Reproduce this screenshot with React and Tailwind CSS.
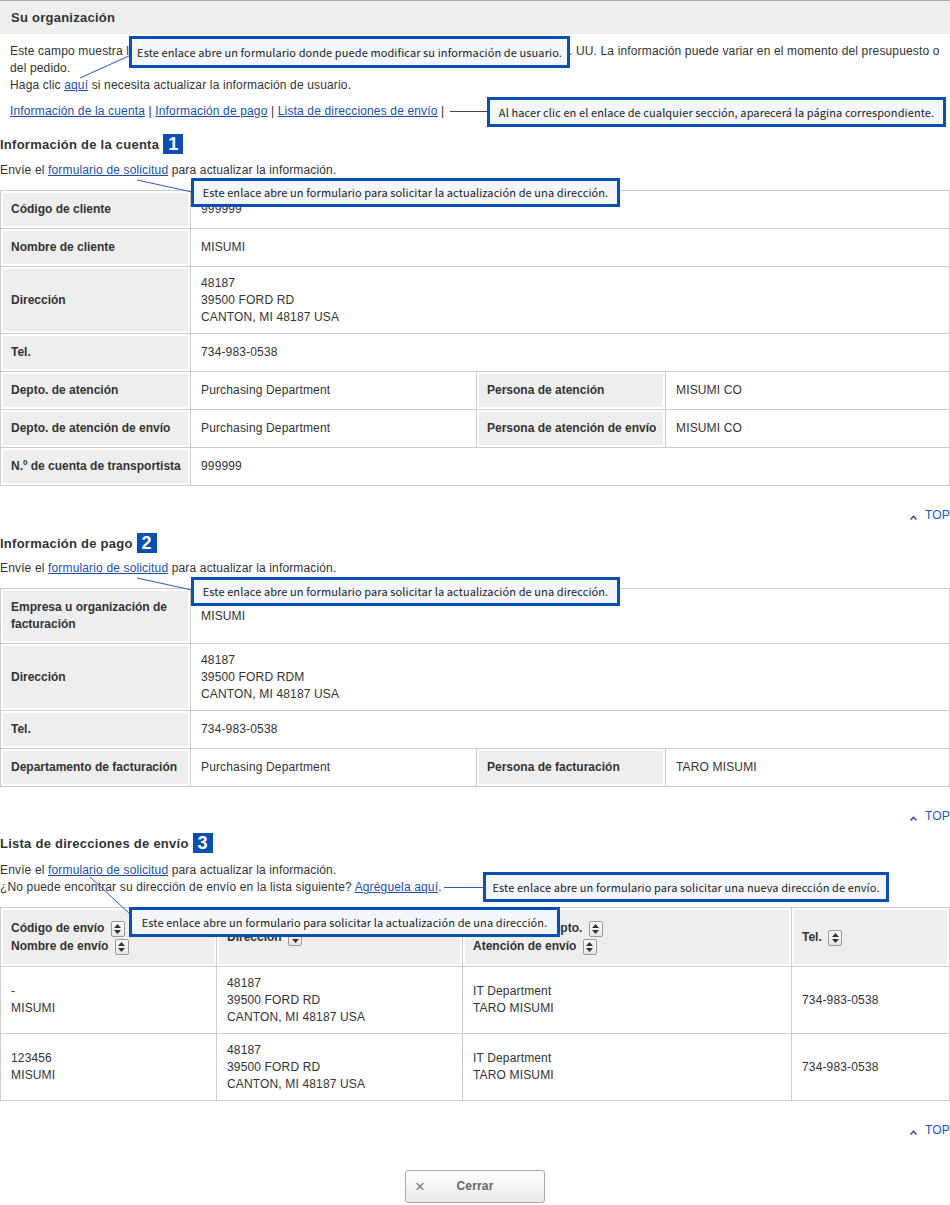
import React from 'react';

const link = 'text-[#1c4fa8] underline';

const Badge = ({ n }) => (
  <span className="inline-flex h-[20px] w-[20px] items-center justify-center bg-[#0b4fb5] text-[18px] font-bold leading-none tracking-normal text-white">
    {n}
  </span>
);

const Heading = ({ children, n, className }) => (
  <div className={`flex h-[20px] items-center gap-[4px] ${className}`}>
    <h3 className="text-[13px] font-bold tracking-[0.25px] text-[#333]">{children}</h3>
    <Badge n={n} />
  </div>
);

const Callout = ({ className, children }) => (
  <div
    className={`absolute flex items-center justify-center whitespace-nowrap border-[3px] border-[#0a50b4] bg-[#f3f7fc] font-['Noto_Sans_CJK_JP','Noto_Sans',sans-serif] text-[11px] tracking-[0.1px] text-[#222] ${className}`}
  >
    {children}
  </div>
);

const Top = ({ className }) => (
  <div className={`flex justify-end ${className}`}>
    <a className="flex items-center gap-[8px] text-[#1a56c8]">
      <svg width="7" height="5" viewBox="0 0 7 5" className="mt-[3px]">
        <path d="M0.5 4.5 L3.5 1.2 L6.5 4.5" fill="none" stroke="#1a4aa0" strokeWidth="1.4" />
      </svg>
      TOP
    </a>
  </div>
);

const Sort = () => (
  <span className="ml-[3px] inline-flex h-[16px] w-[14px] flex-col items-center justify-center gap-[2px] rounded-[2px] border border-[#999] bg-gradient-to-b from-white to-[#e6e6e6] align-middle">
    <svg width="7" height="4" viewBox="0 0 7 4">
      <path d="M3.5 0 L7 4 L0 4 Z" fill="#333" />
    </svg>
    <svg width="7" height="4" viewBox="0 0 7 4">
      <path d="M0 0 L7 0 L3.5 4 Z" fill="#333" />
    </svg>
  </span>
);

const th = 'border border-[#ccc] bg-[#eee] py-[10px] pl-[10px] pr-[4px] text-left align-middle font-bold tracking-[0px] shadow-[inset_0_0_0_2px_#fff]';
const thn = `${th} whitespace-nowrap`;
const td = 'border border-[#ccc] px-[10px] py-[7.5px] align-middle';
const thh = 'border border-[#ccc] bg-[#eee] py-[11px] pl-[10px] pr-[4px] text-left align-middle font-bold leading-[18px] tracking-[0px] whitespace-nowrap shadow-[inset_0_0_0_2px_#fff]';

const Cols = () => (
  <colgroup>
    <col className="w-[190px]" />
    <col className="w-[286px]" />
    <col className="w-[189px]" />
    <col />
  </colgroup>
);

export default function App() {
  return (
    <div className="relative w-[950px] bg-white pb-[3px] font-['Liberation_Sans',Arial,sans-serif] text-[12px] leading-[17px] tracking-[0.15px] text-[#333]">
      <div className="flex h-[34px] items-center border-t border-[#aaa] bg-[#eee] px-[11px]">
        <h2 className="text-[13px] font-bold tracking-[0.25px]">Su organización</h2>
      </div>

      <div className="px-[10px] pt-[9px]">
        <p>
          <span className="whitespace-nowrap">
            Este campo muestra la información de su organización registrada en MISUMI y a para la región de EE. UU. La información puede variar en el momento del presupuesto o
          </span>
          <br />
          del pedido.
          <br />
          Haga clic <a className={link}>aquí</a> si necesita actualizar la información de usuario.
        </p>
        <p className="mt-[9px]">
          <a className={link}>Información de la cuenta</a> | <a className={link}>Información de pago</a> |{' '}
          <a className={link}>Lista de direcciones de envío</a> |
        </p>
      </div>

      {/* Información de la cuenta */}
      <Heading n="1" className="mt-[14px]">Información de la cuenta</Heading>
      <p className="mt-[8px]">
        Envíe el <a className={link}>formulario de solicitud</a> para actualizar la información.
      </p>
      <table className="mt-[11px] w-full table-fixed border-collapse">
        <Cols />
        <tbody>
          <tr>
            <th className={thn}>Código de cliente</th>
            <td className={td} colSpan={3}>999999</td>
          </tr>
          <tr>
            <th className={thn}>Nombre de cliente</th>
            <td className={td} colSpan={3}>MISUMI</td>
          </tr>
          <tr>
            <th className={thn}>Dirección</th>
            <td className={td} colSpan={3}>
              48187
              <br />
              39500 FORD RD
              <br />
              CANTON, MI 48187 USA
            </td>
          </tr>
          <tr>
            <th className={thn}>Tel.</th>
            <td className={td} colSpan={3}>734-983-0538</td>
          </tr>
          <tr>
            <th className={thn}>Depto. de atención</th>
            <td className={td}>Purchasing Department</td>
            <th className={thn}>Persona de atención</th>
            <td className={td}>MISUMI CO</td>
          </tr>
          <tr>
            <th className={thn}>Depto. de atención de envío</th>
            <td className={td}>Purchasing Department</td>
            <th className={thn}>Persona de atención de envío</th>
            <td className={td}>MISUMI CO</td>
          </tr>
          <tr>
            <th className={thn}>N.º de cuenta de transportista</th>
            <td className={td} colSpan={3}>999999</td>
          </tr>
        </tbody>
      </table>
      <Top className="mt-[21px]" />

      {/* Información de pago */}
      <Heading n="2" className="mt-[9px]">Información de pago</Heading>
      <p className="mt-[7px]">
        Envíe el <a className={link}>formulario de solicitud</a> para actualizar la información.
      </p>
      <table className="mt-[11px] w-full table-fixed border-collapse">
        <Cols />
        <tbody>
          <tr>
            <th className={th}>Empresa u organización de facturación</th>
            <td className={td} colSpan={3}>MISUMI</td>
          </tr>
          <tr>
            <th className={thn}>Dirección</th>
            <td className={td} colSpan={3}>
              48187
              <br />
              39500 FORD RDM
              <br />
              CANTON, MI 48187 USA
            </td>
          </tr>
          <tr>
            <th className={thn}>Tel.</th>
            <td className={td} colSpan={3}>734-983-0538</td>
          </tr>
          <tr>
            <th className={thn}>Departamento de facturación</th>
            <td className={td}>Purchasing Department</td>
            <th className={thn}>Persona de facturación</th>
            <td className={td}>TARO MISUMI</td>
          </tr>
        </tbody>
      </table>
      <Top className="mt-[21px]" />

      {/* Lista de direcciones de envío */}
      <Heading n="3" className="mt-[8px]">Lista de direcciones de envío</Heading>
      <p className="mt-[9px]">
        Envíe el <a className={link}>formulario de solicitud</a> para actualizar la información.
        <br />
        ¿No puede encontrar su dirección de envío en la lista siguiente? <a className={link}>Agréguela aquí</a>.
      </p>
      <table className="mt-[11px] w-full table-fixed border-collapse">
        <colgroup>
          <col className="w-[216px]" />
          <col className="w-[246px]" />
          <col className="w-[329px]" />
          <col />
        </colgroup>
        <thead>
          <tr>
            <th className={thh}>
              Código de envío <Sort />
              <br />
              Nombre de envío <Sort />
            </th>
            <th className={thh}>
              Dirección <Sort />
            </th>
            <th className={thh}>
              Atención de Depto. <Sort />
              <br />
              Atención de envío <Sort />
            </th>
            <th className={thh}>
              Tel. <Sort />
            </th>
          </tr>
        </thead>
        <tbody>
          {[
            ['-', 'MISUMI'],
            ['123456', 'MISUMI'],
          ].map(([code, name]) => (
            <tr key={code}>
              <td className={td}>
                {code}
                <br />
                {name}
              </td>
              <td className={td}>
                48187
                <br />
                39500 FORD RD
                <br />
                CANTON, MI 48187 USA
              </td>
              <td className={td}>
                IT Department
                <br />
                TARO MISUMI
              </td>
              <td className={td}>734-983-0538</td>
            </tr>
          ))}
        </tbody>
      </table>
      <Top className="mt-[21px]" />

      <div className="mt-[31px] flex justify-center">
        <button className="flex h-[33px] w-[140px] items-center rounded-[3px] border border-[#aaa] bg-gradient-to-b from-white to-[#e9e9e9] px-[4px] text-[#666]">
          <span className="w-[20px] text-center text-[17px] font-light leading-none text-[#777]">×</span>
          <span className="flex-1 pr-[20px] text-center font-bold">Cerrar</span>
        </button>
      </div>

      {/* connector lines */}
      <svg className="pointer-events-none absolute left-0 top-0" width="950" height="1205">
        <g stroke="#2a5cb8" strokeWidth="1" fill="none">
          <line x1="80" y1="78" x2="131" y2="55" />
          <line x1="137" y1="180" x2="192" y2="192" />
          <line x1="137" y1="578" x2="192" y2="590" />
          <line x1="444" y1="887.5" x2="484" y2="887.5" />
          <line x1="90" y1="877" x2="131" y2="915" />
        </g>
        <line x1="450" y1="111.5" x2="488" y2="111.5" stroke="#444" strokeWidth="1" />
      </svg>

      <Callout className="left-[129px] top-[36px] h-[32px] w-[441px]">
        Este enlace abre un formulario donde puede modificar su información de usuario.
      </Callout>
      <Callout className="left-[487px] top-[97px] h-[30px] w-[459px]">
        Al hacer clic en el enlace de cualquier sección, aparecerá la página correspondiente.
      </Callout>
      <Callout className="left-[191px] top-[178px] h-[29px] w-[429px]">
        Este enlace abre un formulario para solicitar la actualización de una dirección.
      </Callout>
      <Callout className="left-[191px] top-[577px] h-[29px] w-[429px]">
        Este enlace abre un formulario para solicitar la actualización de una dirección.
      </Callout>
      <Callout className="left-[483px] top-[872px] h-[30px] w-[406px]">
        Este enlace abre un formulario para solicitar una nueva dirección de envío.
      </Callout>
      <Callout className="left-[129px] top-[907px] h-[30px] w-[431px]">
        Este enlace abre un formulario para solicitar la actualización de una dirección.
      </Callout>
    </div>
  );
}
